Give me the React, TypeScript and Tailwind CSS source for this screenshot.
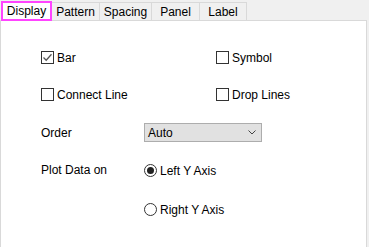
import React from "react";

const font = { fontFamily: '"Liberation Sans", Arial, sans-serif' };

function Checkbox({ checked, label }: { checked?: boolean; label: string }) {
  return (
    <div className="flex h-[19px] items-center gap-[3px]">
      <span className="flex h-[13px] w-[13px] items-center justify-center border border-[#333333] bg-white">
        {checked ? (
          <svg width="11" height="11" viewBox="0 0 11 11">
            <path d="M1.5 5.5 L4.2 8.2 L9.5 2.3" fill="none" stroke="#555555" strokeWidth="1.3" />
          </svg>
        ) : null}
      </span>
      <span>{label}</span>
    </div>
  );
}

function Radio({ checked, label }: { checked?: boolean; label: string }) {
  return (
    <div className="flex h-[19px] items-center gap-[3px]">
      <span className="flex h-[13px] w-[13px] items-center justify-center rounded-full border border-[#333333] bg-white">
        {checked ? <span className="h-[7px] w-[7px] rounded-full bg-[#222222]" /> : null}
      </span>
      <span>{label}</span>
    </div>
  );
}

const tabs = [
  { label: "Pattern", w: "w-[48px]" },
  { label: "Spacing", w: "w-[52px]" },
  { label: "Panel", w: "w-[48px]" },
  { label: "Label", w: "w-[47px]" },
];

export default function App() {
  return (
    <div className="flex h-[247px] w-[369px] flex-col bg-[#f0f0f0] text-[12px] text-black" style={font}>
      <div className="flex h-[20px] items-end pl-[1px]">
        <div className="z-10 -mb-[1px] flex h-[20px] w-[51px] items-center justify-center border-2 border-[#ff44ff] bg-white">
          Display
        </div>
        {tabs.map((t) => (
          <div
            key={t.label}
            className={`flex h-[18px] items-center justify-center border border-b-0 border-l-0 border-[#d9d9d9] bg-[#f0f0f0] ${t.w}`}
          >
            {t.label}
          </div>
        ))}
      </div>

      <div className="mr-[2px] flex flex-1 flex-col border-x border-t border-[#d9d9d9] bg-white pl-[40px] pt-[27px]">
        <div className="flex">
          <div className="w-[175px]">
            <Checkbox checked label="Bar" />
          </div>
          <Checkbox label="Symbol" />
        </div>

        <div className="mt-[18px] flex">
          <div className="w-[175px]">
            <Checkbox label="Connect Line" />
          </div>
          <Checkbox label="Drop Lines" />
        </div>

        <div className="mt-[19px] flex h-[19px] items-center">
          <div className="w-[103px]">Order</div>
          <div className="flex h-[19px] w-[118px] items-center justify-between border border-[#adadad] bg-[#e1e1e1] pl-[3px] pr-[5px]">
            <span>Auto</span>
            <svg width="8" height="5" viewBox="0 0 8 5">
              <path d="M0.5 0.5 L4 4 L7.5 0.5" fill="none" stroke="#444444" strokeWidth="1" />
            </svg>
          </div>
        </div>

        <div className="mt-[19px] flex">
          <div className="w-[103px] leading-[19px]">Plot Data on</div>
          <div className="flex flex-col gap-[20px]">
            <Radio checked label="Left Y Axis" />
            <Radio label="Right Y Axis" />
          </div>
        </div>
      </div>
    </div>
  );
}
